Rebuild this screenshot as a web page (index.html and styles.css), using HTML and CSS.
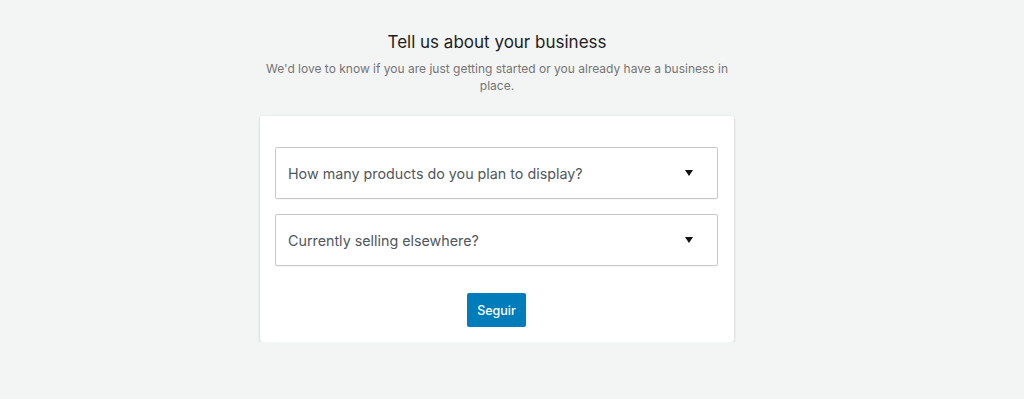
FILE: index.html
```html
<!DOCTYPE html>
<html lang="en">
<head>
  <meta charset="UTF-8" />
  <meta name="viewport" content="width=device-width, initial-scale=1.0"/>
  <title>Tell us about your business</title>
  <link rel="stylesheet" href="styles.css">
</head>
<body>

  <div class="wrap">
    <div class="intro">
      <h2>Tell us about your business</h2>
      <p>We'd love to know if you are just getting started or you already have a business in place.</p>
    </div>

    <div class="card">
      <form>
        <div class="select-box">
          <span class="label">How many products do you plan to display?</span>
          <span class="arrow"></span>
        </div>
        <div class="select-box">
          <span class="label">Currently selling elsewhere?</span>
          <span class="arrow"></span>
        </div>
        <div class="actions">
          <button type="button" class="btn">Seguir</button>
        </div>
      </form>
    </div>
  </div>

</body>
</html>
```

FILE: styles.css
```css
:root {
  --bg: #f3f4f4;
  --card-bg: #ffffff;
  --border: #c6c8cb;
  --primary: #007cba;
  --text: #1e1e1e;
  --muted: #757575;
  --field-text: #50575e;
}
* { box-sizing: border-box; margin:0; padding:0; font-family: Inter, 'Noto Sans', sans-serif; }
body {
  background: var(--bg);
  display:flex; justify-content:center;
  padding-right:30px;
}
.wrap { width:474px; padding-top:31px; }
.intro { text-align:center; }
.intro h2 { font-size:17px; font-weight:400; color: var(--text); line-height:22px; margin-bottom:7px; }
.intro p { font-size:12px; color: var(--muted); line-height:17px; padding:0 4px; }
.card {
  margin-top:22px;
  background: var(--card-bg);
  border-radius:3px;
  padding:31px 16px 15px 15px;
  box-shadow: 0 1px 3px rgba(0,0,0,0.2);
}
.select-box {
  display:flex; align-items:center; justify-content:space-between;
  height:52px; padding:0 24px 0 12px;
  border:1px solid var(--border); border-radius:2px;
  margin-bottom:15px;
  box-shadow: 0 1px 1px rgba(0,0,0,0.04);
}
.select-box .label { font-size:14.3px; color: var(--field-text); }
.arrow {
  width:0; height:0;
  border-left:4px solid transparent; border-right:4px solid transparent;
  border-top:6px solid #111;
}
.actions { display:flex; justify-content:center; padding-top:12px; }
.btn {
  width:59px; height:34px; border:none; border-radius:2px;
  background: var(--primary); color:#fff; font-size:12.5px; font-weight:500; cursor:pointer;
}
```
